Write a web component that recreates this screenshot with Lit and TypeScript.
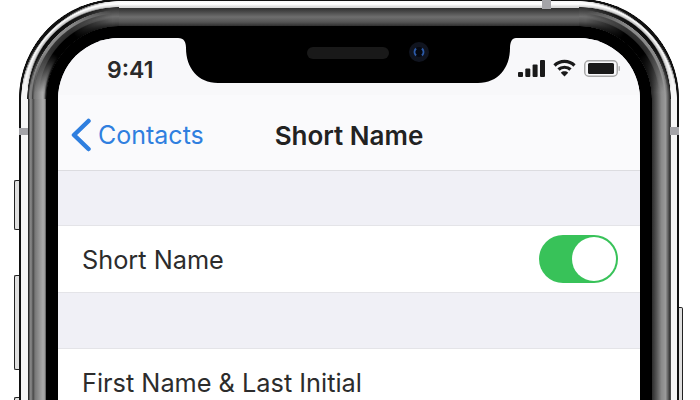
import { LitElement, html, css } from "lit";
import { customElement } from "lit/decorators.js";

@customElement("app-root")
export class AppRoot extends LitElement {
  static styles = css`
    :host { display: block; width: 700px; height: 400px; overflow: hidden; background: #fff; font-family: Inter, "Liberation Sans", sans-serif; }
    .stage { height: 400px; padding-left: 19px; box-sizing: border-box; filter: blur(0.55px); }
    .phone { position: relative; width: 660px; height: 620px; margin-top: -1px; box-sizing: border-box; padding: 2px; border-radius: 100px; background: #111; }
    .steel { height: 100%; box-sizing: border-box; padding: 6.5px; border-radius: 98px;
      background: linear-gradient(to bottom, #f6f6f6 0, #fff 3px, #d8d8d8 6px, #bbb 6.5px) center top / 100% 6.5px no-repeat, #f6f6f6; }
    .band { height: 100%; box-sizing: border-box; padding: 18.5px; border-radius: 91.5px; background-color: #777;
      background-image:
        linear-gradient(to bottom, #2e2e2e 0, #4a4a4a 4px, #6e6e6e 9px, #555 14px, #2a2a2a 18.5px),
        linear-gradient(to right, #222 0, #333 1px, #888 2px, #777 4px, #444 5px, #777 7px, #aaa 15px, #999 17px, #111 18.5px),
        linear-gradient(to left, #222 0, #555 2px, #9a9a9a 5px, #8a8a8a 9px, #555 14px, #2c2c2c 18.5px);
      background-position: left top, left top, right top;
      background-size: 100% 18.5px, 18.5px 100%, 18.5px 100%;
      background-repeat: no-repeat; }
    .glass { height: 100%; box-sizing: border-box; padding: 12px; border-radius: 73px; background: #000; }
    .screen { height: 100%; border-radius: 61px; overflow: hidden; background: #f0f0f6; display: flex; flex-direction: column; color: #111; }

    .corner { position: absolute; top: 0; width: 100px; height: 100px; }
    .corner.tl { left: 0; background: radial-gradient(circle at 100% 100%, transparent 72.5px, #111 73px, #999 75px, #aaa 76.5px, #777 84.5px, #444 86.5px, #777 87.5px, #888 89.5px, #333 90.5px, #222 91.5px, #f6f6f6 92px, #f6f6f6 97.5px, #111 98px, #111 99.5px, transparent 100px); }
    .corner.tr { right: 0; transform: scaleX(-1); background: radial-gradient(circle at 100% 100%, transparent 72.5px, #2c2c2c 73px, #555 77.5px, #8a8a8a 82.5px, #9a9a9a 86.5px, #555 89.5px, #222 91.5px, #f6f6f6 92px, #f6f6f6 97.5px, #111 98px, #111 99.5px, transparent 100px); }
    .corner::before, .corner::after { content: ""; position: absolute; inset: 0; }
    .corner::before {
      background: radial-gradient(circle at 100% 100%, transparent 72.5px, #2a2a2a 73px, #555 77.5px, #6e6e6e 82.5px, #4a4a4a 87.5px, #2e2e2e 91.5px, #bbb 92px, #d8d8d8 92.5px, #fff 95px, #f6f6f6 97.5px, #111 98px, #111 99.5px, transparent 100px);
      -webkit-mask-image: conic-gradient(from 270deg at 100% 100%, transparent 25deg, #000 60deg);
      mask-image: conic-gradient(from 270deg at 100% 100%, transparent 25deg, #000 60deg);
    }
    .corner::after {
      background: radial-gradient(circle at 100% 100%, transparent 72.5px, #000 73px, #000 80px, #2a2a2a 81px, #333 85px, #888 86px, #8c8c8c 88.500px, #111 89px, #0a0a0a 92px, #bbb 93px, #fff 95.500px, #aaa 96.500px, #111 97px, #111 99.500px, transparent 100px);
      -webkit-mask-image: conic-gradient(from 270deg at 100% 100%, transparent 5deg, #000 35deg, #000 55deg, transparent 85deg);
      mask-image: conic-gradient(from 270deg at 100% 100%, transparent 5deg, #000 35deg, #000 55deg, transparent 85deg);
    }

    .status { display: flex; height: 57px; background: #f8f8fa; flex: none; }
    .time { width: 120px; box-sizing: border-box; padding: 18px 0 0 49px; font-size: 23px; line-height: 28px; font-weight: 600; color: #2a2a2a; }
    .notch { display: block; width: 338px; height: 46px; flex: none; }
    .icons { flex: 1; min-width: 0; display: flex; justify-content: flex-end; align-items: flex-start; gap: 8px; padding: 22px 20px 0 0; }
    .icons svg { display: block; flex: none; }
    .wifi { margin-top: -1px; }

    .nav { display: grid; grid-template-columns: 1fr auto 1fr; align-items: center; height: 76px; flex: none; box-sizing: border-box; padding-top: 5px; background: #fafafc; border-bottom: 1px solid #dcdce0; font-size: 26px; }
    .back { display: flex; align-items: center; gap: 7px; padding-left: 13px; font-size: 25px; color: #2f7fdf; }
    .back svg { display: block; }
    .title { font-weight: 600; color: #222; }

    .gap { height: 54px; flex: none; background: #f0f0f6; }
    .gap.wide { height: 55px; }
    .row { display: flex; align-items: center; justify-content: space-between; height: 68px; flex: none; box-sizing: border-box; padding: 0 22px 0 24px; background: #fff; border-top: 1px solid #e4e4e8; border-bottom: 1px solid #e4e4e8; font-size: 25.300px; color: #2c2c2c; }
    .row.last { border-bottom: none; }

    .toggle { display: flex; justify-content: flex-end; align-items: center; width: 79px; height: 48px; box-sizing: border-box; padding: 2px; border-radius: 24px; background: #38c259; }
    .knob { width: 44px; height: 44px; border-radius: 50%; background: #fff; }

    .btn { position: absolute; width: 5px; box-sizing: border-box; background: #e0e0e0; border: 1.5px solid #222; }
    .btn.l { left: -5px; border-right: none; border-radius: 2px 0 0 2px; }
    .btn.r { right: -4px; width: 4px; border-left: none; border-radius: 0 2px 2px 0; }
    .b1 { top: 181px; height: 50px; }
    .b2 { top: 276px; height: 95px; }
    .b3 { top: 398px; height: 95px; }
    .b4 { top: 308px; height: 150px; }
    .ant { position: absolute; background: #a4a4a8; }
    .a1 { left: 523px; top: 0; width: 9px; height: 10px; }
    .a2 { left: 0; top: 129px; width: 9px; height: 7px; }
    .a3 { right: 0; top: 128px; width: 9px; height: 8px; }
  `;

  render() {
    return html`
      <div class="stage">
        <div class="phone">
          <div class="steel">
            <div class="band">
              <div class="glass">
                <div class="screen">
                  <div class="status">
                    <div class="time">9:41</div>
                    <svg class="notch" viewBox="178 38 338 46">
                      <path fill="#000" d="M178 38C184 38 186 42 186 48C186 68 198 83 218 83L478 83C498 83 510 68 510 48C510 42 512 38 516 38Z" />
                      <rect x="307" y="47" width="82" height="12" rx="6" fill="#191919" />
                      <circle cx="419" cy="52" r="10" fill="#10141f" />
                      <circle cx="419" cy="52" r="5" fill="#050810" />
                      <path d="M416 48.500A5 5 0 0 0 416 55.500M422 48.500A5 5 0 0 1 422 55.500" fill="none" stroke="#2c5aa8" stroke-width="2" />
                    </svg>
                    <div class="icons">
                      <svg width="27" height="17" viewBox="0 0 27 17" fill="#1a1a1a">
                        <rect x="0" y="12" width="5" height="5" rx="1" />
                        <rect x="7.300" y="8.500" width="5" height="8.500" rx="1" />
                        <rect x="14.600" y="4.500" width="5" height="12.500" rx="1" />
                        <rect x="22" y="0" width="5" height="17" rx="1" />
                      </svg>
                      <svg class="wifi" width="23" height="18" viewBox="0 0 23 18" fill="none" stroke="#1a1a1a" stroke-width="3.200">
                        <path d="M1.500 6.500C7 1 16 1 21.500 6.500" />
                        <path d="M5.500 10.500C8.500 7.500 14.500 7.500 17.500 10.500" />
                        <path d="M11.500 17.500L7.800 13.700C9.800 11.900 13.200 11.900 15.200 13.700Z" fill="#1a1a1a" stroke="none" />
                      </svg>
                      <svg width="36" height="17" viewBox="0 0 36 17">
                        <rect x="0.750" y="0.750" width="32.500" height="15.500" rx="4" fill="none" stroke="#a8a8a8" stroke-width="1.500" />
                        <rect x="4" y="3" width="26" height="11" rx="1.500" fill="#1a1a1a" />
                        <rect x="34.500" y="6" width="1.500" height="5" rx="0.750" fill="#b5b5b5" />
                      </svg>
                    </div>
                  </div>
                  <div class="nav">
                    <div class="back">
                      <svg width="20" height="34" viewBox="0 0 20 34" fill="none" stroke="#2f7fdf" stroke-width="4.500" stroke-linecap="round" stroke-linejoin="round">
                        <path d="M17.500 3L3 17L17.500 31" />
                      </svg>
                      <span>Contacts</span>
                    </div>
                    <div class="title">Short Name</div>
                    <div></div>
                  </div>
                  <div class="gap"></div>
                  <div class="row">
                    <span>Short Name</span>
                    <div class="toggle"><div class="knob"></div></div>
                  </div>
                  <div class="gap wide"></div>
                  <div class="row last"><span>First Name &amp; Last Initial</span></div>
                </div>
              </div>
            </div>
          </div>
          <div class="corner tl"></div>
          <div class="corner tr"></div>
          <div class="btn l b1"></div>
          <div class="btn l b2"></div>
          <div class="btn l b3"></div>
          <div class="btn r b4"></div>
          <div class="ant a1"></div>
          <div class="ant a2"></div>
          <div class="ant a3"></div>
        </div>
      </div>
    `;
  }
}
